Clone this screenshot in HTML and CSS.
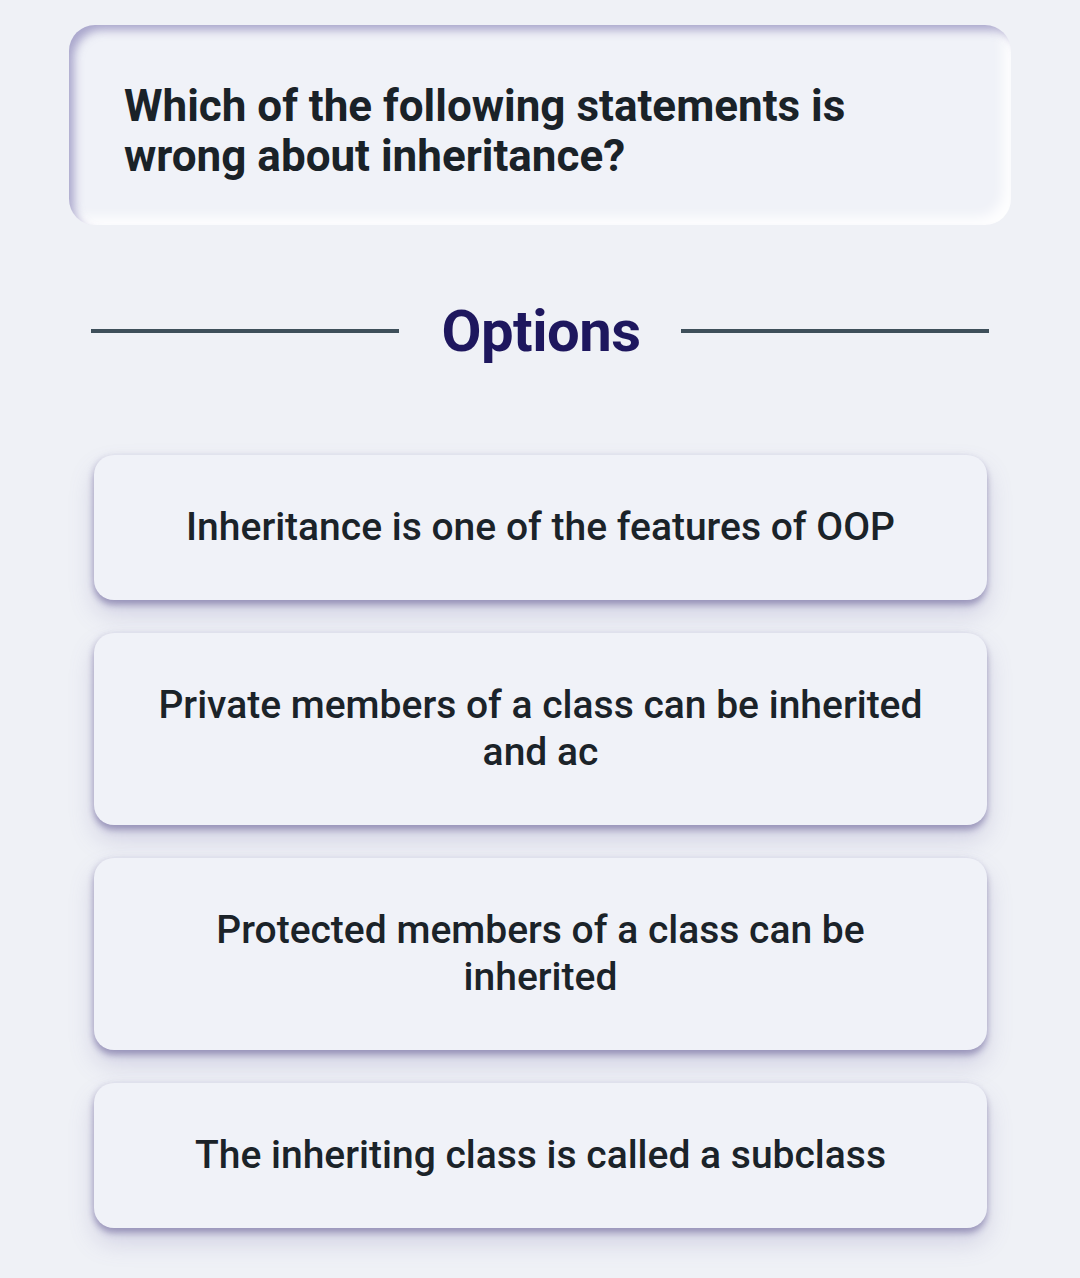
FILE: index.html
```html
<!DOCTYPE html>
<html lang="en">
<head>
<meta charset="utf-8">
<title>Quiz</title>
<link rel="stylesheet" href="styles.css">
</head>
<body>
<main class="page">
  <section class="question-card">
    <h1 class="question-text">Which of the following statements is wrong about inheritance?</h1>
  </section>
  <div class="options-heading">
    <span class="rule"></span>
    <h2 class="options-title">Options</h2>
    <span class="rule"></span>
  </div>
  <ul class="options">
    <li class="option">Inheritance is one of the features of OOP</li>
    <li class="option">Private members of a class can be inherited and ac</li>
    <li class="option">Protected members of a class can be inherited</li>
    <li class="option">The inheriting class is called a subclass</li>
  </ul>
</main>
</body>
</html>
```
FILE: styles.css
```css
html, body {
  margin: 0;
  padding: 0;
  background: #eff1f6;
}
body {
  font-family: Roboto, "Liberation Sans", sans-serif;
  color: #1b2329;
}
.page {
  width: 1080px;
  height: 1278px;
  box-sizing: border-box;
  padding-top: 25px;
  overflow: hidden;
}
.question-card {
  margin: 0 69px;
  height: 200px;
  box-sizing: border-box;
  border-radius: 26px;
  background: #f0f2f8;
  padding: 56px 55px 0 55px;
  box-shadow:
    inset 7px 7px 10px -2px rgba(112, 104, 168, 0.55),
    inset -8px -8px 12px rgba(255, 255, 255, 0.9);
}
.question-text {
  margin: 0;
  font-size: 44px;
  line-height: 50px;
  font-weight: 700;
  color: #1a2228;
}
.options-heading {
  display: flex;
  align-items: center;
  margin: 71px 91px 0 91px;
  height: 70px;
}
.rule {
  flex: 1;
  height: 4px;
  background: #3e4f5a;
}
.options-title {
  margin: 0 40px 0 42px;
  font-size: 58px;
  font-weight: 700;
  color: #1e175e;
  line-height: 70px;
  letter-spacing: -0.5px;
}
.options {
  list-style: none;
  margin: 89px 93px 0 94px;
  padding: 0;
  display: flex;
  flex-direction: column;
  gap: 33px;
}
.option {
  background: #f0f2f8;
  border-radius: 20px;
  padding: 49px 50px;
  text-align: center;
  font-size: 39px;
  line-height: 47px;
  font-weight: 500;
  color: #1b2329;
  box-shadow:
    0 5px 6px rgba(90, 82, 140, 0.45),
    0 14px 24px rgba(120, 112, 170, 0.25),
    -2px 0 6px rgba(120, 112, 170, 0.12);
}
```
